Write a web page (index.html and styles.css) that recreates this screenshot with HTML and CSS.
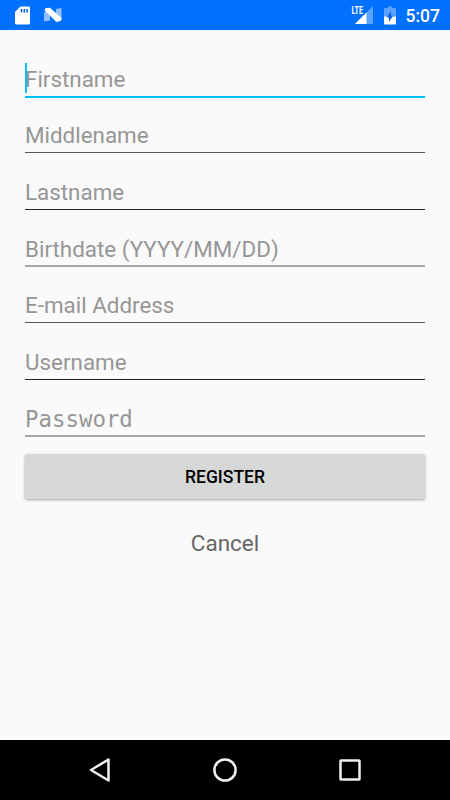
FILE: index.html
```
<!DOCTYPE html>
<html lang="en">
<head>
    <meta charset="UTF-8">
    <meta name="viewport" content="width=device-width, initial-scale=1.0">
    <title>Register</title>
    <link rel="stylesheet" href="styles.css">
</head>
<body>
    <header class="statusBar">
        <svg class="sdIcon" width="16" height="19" viewBox="0 0 16 19">
            <path fill="#fff" d="M5.5 0.5H13.5A1.5 1.5 0 0 1 15 2V17A1.5 1.5 0 0 1 13.5 18.5H1.5A1.5 1.5 0 0 1 0 17V6z"/>
            <path stroke="#0050ee" stroke-width="1.5" d="M6.5 3V6.5M9.3 3V6.5M12.1 3V6.5"/>
        </svg>
        <svg class="nIcon" width="19" height="16" viewBox="0 0 19 16">
            <path fill="#8fc0ff" d="M0 6L1.5 3.5L6 7V13.5L0 14.5zM17.5 1V13L12 8V2z"/>
            <path fill="#fff" d="M0.5 3Q1 1.3 2.5 1.1L6 0.8L17.5 11Q17.8 13.5 16.300 14.1L12.300 15z"/>
        </svg>
        <div class="statusRight">
            <svg class="signalIcon" width="23" height="20" viewBox="0 0 23 20">
                <path fill="#5ba3ff" d="M22 1V19H4z"/>
                <path fill="#fff" d="M15.5 7.5V19H4z"/>
                <path fill="#0070ff" d="M0 0H13.5V10H0z"/>
                <text x="0.5" y="9" class="lte" textLength="11.5" lengthAdjust="spacingAndGlyphs">LTE</text>
            </svg>
            <svg class="batteryIcon" width="12" height="19" viewBox="0 0 12 19">
                <path fill="#5ba3ff" d="M4 0.5H8V2H11A1 1 0 0 1 12 3V10.5H0V3A1 1 0 0 1 1 2H4z"/>
                <path fill="#fff" d="M0 10.5H12V17.5A1 1 0 0 1 11 18.5H1A1 1 0 0 1 0 17.5z"/>
                <path fill="#0060e8" d="M7 5V9.5H9.2L5 16V11.5H2.8z"/>
            </svg>
            <span class="clock">5:07</span>
        </div>
    </header>

    <main class="content">
        <form id="form" class="formBox">
            <div class="formElements active">
                <input type="text" name="firstname" placeholder="Firstname">
                <span class="caret"></span>
            </div>
            <div class="formElements">
                <input type="text" name="middlename" placeholder="Middlename">
            </div>
            <div class="formElements dark">
                <input type="text" name="lastname" placeholder="Lastname">
            </div>
            <div class="formElements light">
                <input type="text" name="birthdate" placeholder="Birthdate (YYYY/MM/DD)">
            </div>
            <div class="formElements">
                <input type="email" name="email" placeholder="E-mail Address">
            </div>
            <div class="formElements dark">
                <input type="text" name="username" placeholder="Username">
            </div>
            <div class="formElements light password">
                <input type="password" name="password" placeholder="Password">
            </div>
            <button type="submit" class="register">REGISTER</button>
            <button type="button" class="cancel">Cancel</button>
        </form>
    </main>

    <footer class="navBar">
        <svg width="24" height="26" viewBox="0 0 24 26">
            <path d="M20.5 2.5V23.5L3 13z"/>
        </svg>
        <svg width="26" height="26" viewBox="0 0 26 26">
            <circle cx="13" cy="13" r="10.6"/>
        </svg>
        <svg width="24" height="26" viewBox="0 0 24 26">
            <rect x="2.5" y="3.5" width="19" height="19" rx="0.5"/>
        </svg>
    </footer>
</body>
</html>
```

FILE: styles.css
```
* {
    margin: 0;
    padding: 0;
    box-sizing: border-box;
}

body {
    display: flex;
    flex-direction: column;
    height: 800px;
    overflow: hidden;
    background: #fafafa;
    font-family: Roboto, sans-serif;
}

/* status bar */
.statusBar {
    display: flex;
    align-items: center;
    height: 30px;
    padding: 0 10px 0 15px;
    background: #0070ff;
    color: #fff;
}

.nIcon {
    margin-left: 13px;
}

.statusRight {
    display: flex;
    align-items: center;
    margin-left: auto;
}

.lte {
    font-size: 11px;
    font-weight: 700;
    fill: #fff;
}

.batteryIcon {
    margin-left: 10px;
}

.clock {
    margin-left: 10px;
    padding-top: 2px;
    font-size: 17.5px;
    font-weight: 500;
    line-height: 20px;
}

/* form */
.content {
    flex: 1;
    padding: 40px 25px 0;
}

.formBox {
    display: grid;
    grid-template-rows: 28px 55px 57px 57px 56px 57px 57px;
}

.formElements {
    position: relative;
    display: flex;
    align-items: flex-end;
    border-bottom: 1px solid #555;
}

.formElements.dark {
    border-bottom-color: #222;
}

.formElements.light {
    border-bottom: 2px solid #a6a6a6;
}

.formElements.active {
    border-bottom: 2px solid #00bfff;
}

input {
    width: 100%;
    height: 34px;
    border: none;
    outline: none;
    background: transparent;
    font-family: Roboto, sans-serif;
    font-size: 22.4px;
}

input::placeholder {
    color: #969696;
    opacity: 1;
}

.light input {
    height: 32px;
}

.password input {
    font-family: "DejaVu Sans Mono", monospace;
    font-size: 22.4px;
}

/* text cursor */
.caret {
    position: absolute;
    left: 0;
    bottom: 3px;
    width: 2px;
    height: 30px;
    background: #00bfff;
}

.register {
    height: 45px;
    margin-top: 17px;
    border: none;
    border-radius: 2px;
    background: #d6d7d7;
    box-shadow: 0 1px 3px rgba(0, 0, 0, 0.35);
    color: #000;
    font-family: Roboto, sans-serif;
    font-size: 17.5px;
    font-weight: 500;
}

.cancel {
    justify-self: center;
    margin-top: 30px;
    border: none;
    background: none;
    color: #666;
    font-family: Roboto, sans-serif;
    font-size: 22.5px;
    line-height: 28px;
}

/* navigation bar */
.navBar {
    display: flex;
    align-items: center;
    justify-content: space-between;
    height: 60px;
    padding: 0 88px;
    background: #000;
}

.navBar svg {
    fill: none;
    stroke: #f0f0f0;
    stroke-width: 2.5;
    stroke-linejoin: round;
}
```
